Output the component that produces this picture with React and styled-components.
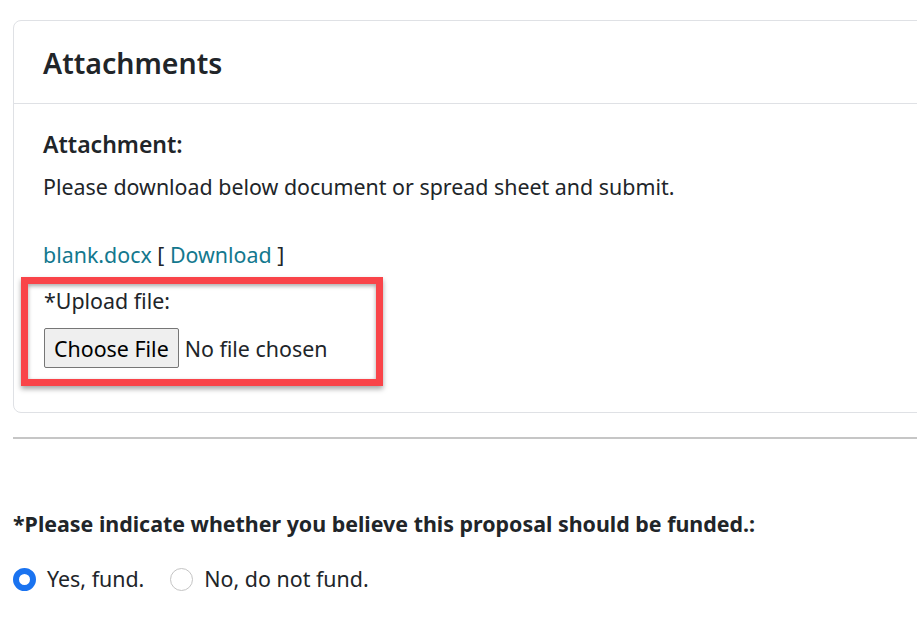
import React from 'react'
import styled, { createGlobalStyle } from 'styled-components'

const GlobalStyle = createGlobalStyle`
  html, body {
    margin: 0;
    padding: 0;
    background: #fff;
    overflow: hidden;
  }
  body {
    font-family: "Noto Sans", "Open Sans", "Liberation Sans", sans-serif;
    color: #212529;
  }
`

const Page = styled.div`
  width: 980px;
  padding: 20px 0 0 13px;
`

const Card = styled.section`
  border: 1px solid #dfe1e5;
  border-radius: 8px;
  background: #fff;
`

const CardHeader = styled.header`
  height: 83px;
  padding: 3px 29px 0;
  box-sizing: border-box;
  display: flex;
  align-items: center;
  border-bottom: 1px solid #dfe1e5;
`

const Title = styled.h2`
  margin: 0;
  font-size: 28.5px;
  font-weight: 600;
  line-height: 1;
`

const CardBody = styled.div`
  padding: 23px 29px 26px;
`

const Label = styled.h3`
  margin: 0;
  font-size: 23px;
  font-weight: 600;
  line-height: 34px;
`

const Text = styled.p`
  margin: 10px 0 0;
  font-size: 21.4px;
  line-height: 32px;
`

const LinkRow = styled.div`
  margin-top: 36px;
  font-size: 21.4px;
  line-height: 32px;
`

const Link = styled.a`
  color: #13788e;
  text-decoration: none;
`

const Highlight = styled.div`
  width: 332px;
  margin: 6px 0 0 -22px;
  padding: 1px 0 11px 16px;
  border: 7px solid #f94449;
  box-shadow: 0 3px 5px rgba(0, 0, 0, 0.35), inset 0 2px 4px rgba(0, 0, 0, 0.35);
`

const UploadLabel = styled.label`
  display: block;
  font-size: 21.4px;
  line-height: 32px;
`

const FileInput = styled.input`
  display: block;
  margin-top: 11px;
  font-family: "Noto Sans", "Open Sans", sans-serif;
  font-size: 21.4px;
  color: #212529;

  &::file-selector-button {
    font: inherit;
    height: 40px;
    padding: 0 9px;
    margin-right: 6px;
    background: #efefef;
    border: 1px solid #767676;
    border-radius: 2px;
    color: #000;
  }
`

const Rule = styled.hr`
  margin: 24px 0 0;
  border: 0;
  border-top: 2px solid #c6c6c6;
`

const Question = styled.p`
  margin: 69px 0 0;
  font-size: 21.4px;
  font-weight: 700;
  line-height: 32px;
`

const RadioGroup = styled.div`
  display: flex;
  align-items: center;
  gap: 26px;
  margin-top: 23px;
`

const RadioOption = styled.label`
  display: flex;
  align-items: center;
  gap: 11px;
  font-size: 21.4px;
  line-height: 32px;
`

const Radio = styled.input`
  appearance: none;
  margin: 0;
  width: 23px;
  height: 23px;
  border-radius: 50%;
  border: 1px solid #c4c4c4;
  background: #fff;

  &:checked {
    border: 6px solid #1a73f0;
    background: #fff;
  }
`

export default function App() {
  return (
    <Page>
      <GlobalStyle />
      <Card>
        <CardHeader>
          <Title>Attachments</Title>
        </CardHeader>
        <CardBody>
          <Label>Attachment:</Label>
          <Text>Please download below document or spread sheet and submit.</Text>
          <LinkRow>
            <Link href="#">blank.docx</Link> [ <Link href="#">Download</Link> ]
          </LinkRow>
          <Highlight>
            <UploadLabel htmlFor="upload">*Upload file:</UploadLabel>
            <FileInput id="upload" type="file" />
          </Highlight>
        </CardBody>
      </Card>
      <Rule />
      <Question>*Please indicate whether you believe this proposal should be funded.:</Question>
      <RadioGroup>
        <RadioOption>
          <Radio type="radio" name="fund" defaultChecked />
          Yes, fund.
        </RadioOption>
        <RadioOption>
          <Radio type="radio" name="fund" />
          No, do not fund.
        </RadioOption>
      </RadioGroup>
    </Page>
  )
}
